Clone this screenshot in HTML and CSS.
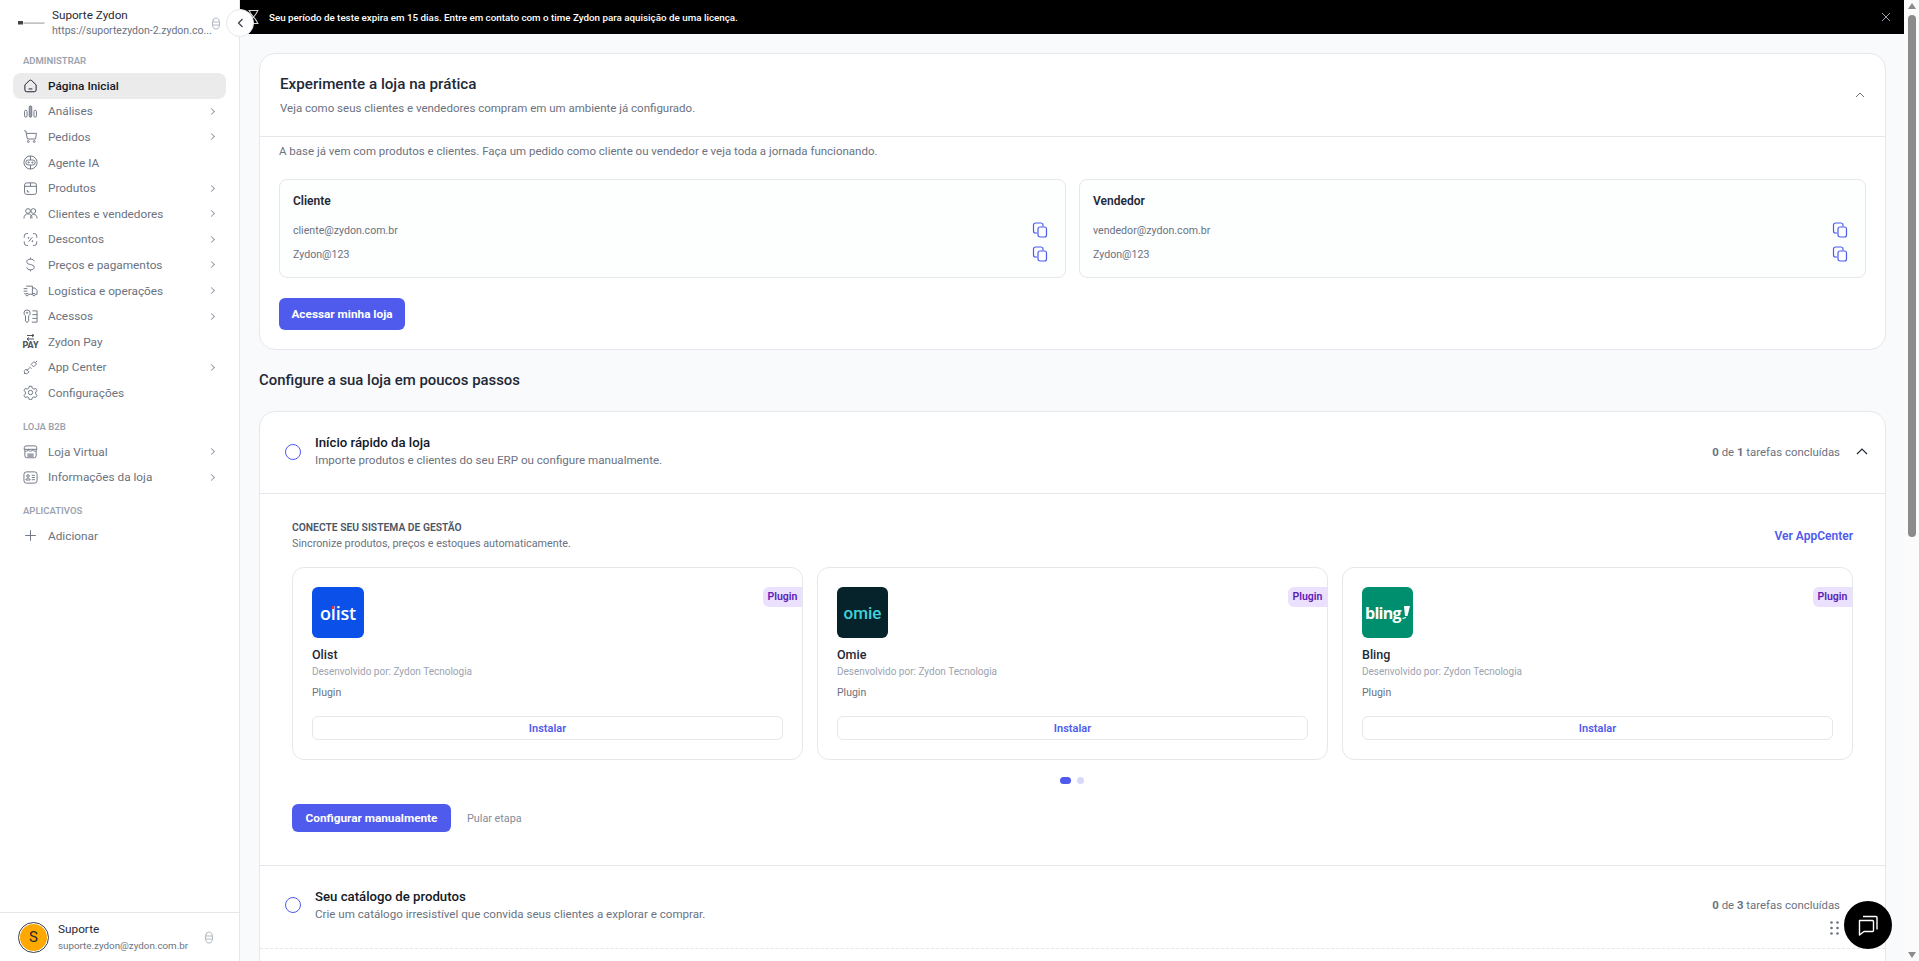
FILE: index.html
```html
<!DOCTYPE html>
<html lang="pt-BR">
<head>
<meta charset="utf-8">
<title>Zydon</title>
<link rel="stylesheet" href="styles.css">
</head>
<body>
<aside class="sidebar">
  <div class="brand">
    <svg class="brand-logo" width="28" height="4" viewBox="0 0 28 4"><rect x="1" y="0" width="5" height="3.500" fill="#444"/><rect x="6.500" y="1.500" width="21" height="1.200" fill="#aaa"/></svg>
    <div class="brand-text">
      <div class="brand-name">Suporte Zydon</div>
      <div class="brand-url">https://suportezydon-2.zydon.co...</div>
    </div>
    <svg class="stack-icon" width="10" height="13" viewBox="0 0 10 13"><ellipse cx="5" cy="6.5" rx="3.6" ry="5.5" fill="none" stroke="#b4bac4" stroke-width="1.1"/><path d="M1.5 5h7M1.5 8h7" stroke="#b4bac4" stroke-width="1"/></svg>
  </div>
  <nav class="nav">
    <div class="nav-label nav-label-first">ADMINISTRAR</div>
    <a class="nav-item active"><svg class="ni" viewBox="0 0 24 24"><path d="M3 11 10 4.200a3 3 0 0 1 4 0L21 11v8a3 3 0 0 1-3 3H6a3 3 0 0 1-3-3ZM9 17.500h6"/></svg><span>Página Inicial</span></a>
    <a class="nav-item"><svg class="ni" viewBox="0 0 24 24"><rect x="2.500" y="10" width="4" height="11" rx="2"/><rect x="10" y="3" width="4" height="18" rx="2" fill="#9ca3af"/><rect x="17.500" y="10" width="4" height="11" rx="2"/></svg><span>Análises</span><i class="chev"></i></a>
    <a class="nav-item"><svg class="ni" viewBox="0 0 24 24"><path d="M2 3h2.500l2.500 13h13l1.500-9H5.500"/><circle cx="8.500" cy="20" r="1.500"/><circle cx="18" cy="20" r="1.500"/></svg><span>Pedidos</span><i class="chev"></i></a>
    <a class="nav-item"><svg class="ni" viewBox="0 0 24 24"><circle cx="12" cy="12" r="10.500"/><rect x="4.500" y="8" width="15" height="8" rx="4"/><circle cx="9" cy="12" r="1"/><circle cx="15" cy="12" r="1"/><path d="M12 1.500V8M12 16v6.500"/></svg><span>Agente IA</span></a>
    <a class="nav-item"><svg class="ni" viewBox="0 0 24 24"><rect x="2.500" y="3" width="19" height="18.500" rx="3.500"/><path d="M2.500 8.500h19M12 3v5.500M7 14.500v3h3"/></svg><span>Produtos</span><i class="chev"></i></a>
    <a class="nav-item"><svg class="ni" viewBox="0 0 24 24"><circle cx="8" cy="8" r="3.800"/><circle cx="16.500" cy="8" r="3.800"/><path d="M1.500 20c0-5 3-7.500 6.500-7.500s6.500 2.500 6.500 7.500M12 20c0-4 2-6.500 5-6.500 3.500 0 5.500 2.500 5.500 6.500"/></svg><span>Clientes e vendedores</span><i class="chev"></i></a>
    <a class="nav-item"><svg class="ni" viewBox="0 0 24 24"><path d="M8 2.500H6a4 4 0 0 0-4 4V9M16 2.500h2a4 4 0 0 1 4 4V9M8 21.500H6a4 4 0 0 1-4-4V15M16 21.500h2a4 4 0 0 0 4-4V15M9 15.500l6-7"/><circle cx="9" cy="9.500" r=".8"/><circle cx="15" cy="14.500" r=".8"/></svg><span>Descontos</span><i class="chev"></i></a>
    <a class="nav-item"><svg class="ni" viewBox="0 0 24 24"><path d="M18 7c-.5-2.500-3-3.500-6-3.500-3.500 0-6 1.500-6 4.200 0 6 12 2.800 12 8.600 0 2.700-2.500 4.200-6 4.200-3.300 0-5.700-1.300-6-4M12 1v2.500M12 20.500V23"/></svg><span>Preços e pagamentos</span><i class="chev"></i></a>
    <a class="nav-item"><svg class="ni" viewBox="0 0 24 24"><path d="M5 5h10v13H9M15 8h4l3.500 4v6H20M1 9h6M1 13h6M2 17h2"/><circle cx="6.500" cy="18.500" r="2"/><circle cx="17.500" cy="18.500" r="2"/></svg><span>Logística e operações</span><i class="chev"></i></a>
    <a class="nav-item"><svg class="ni" viewBox="0 0 24 24"><path d="M6.500 1.500a5 5 0 0 1 5 5c0 2-1 3.500-2.500 4.300V19l-2.500 3L4 19v-8.200A5 5 0 0 1 1.500 6.500a5 5 0 0 1 5-5ZM15 3h7.500v18H14M15 9h7.500M15 15h7.500"/><circle cx="6.500" cy="6" r="1"/></svg><span>Acessos</span><i class="chev"></i></a>
    <a class="nav-item"><span class="pay-icon"><svg width="11" height="7" viewBox="0 0 11 7"><path d="M2 1.500h7M7 0l2 1.500L7 3M9 5H2M4 3.500 2 5l2 1.500" fill="none" stroke="#4b5563" stroke-width="1"/></svg><b>PAY</b></span><span>Zydon Pay</span></a>
    <a class="nav-item"><svg class="ni" viewBox="0 0 24 24"><path d="M13 7l4-4 2 .5 1.500 1.500.5 2-4 4Z M10.500 12.500 6 17"/><path d="M5 14.500l4.500 4.500-2 2a3 3 0 0 1-4.500-4.500Z"/><path d="M10 10.500l3.500 3.500M1.500 22.500l1.500-1.500M20 4l2.500-2.500"/></svg><span>App Center</span><i class="chev"></i></a>
    <a class="nav-item"><svg class="ni" viewBox="0 0 24 24"><circle cx="12" cy="12" r="3.500"/><path d="M10 2h4l.7 3 2.700 1.500 3-.9 2 3.400-2.200 2.200v3.100l2.200 2.200-2 3.400-3-.9-2.700 1.500-.7 3h-4l-.7-3-2.700-1.500-3 .9-2-3.400 2.200-2.200v-3.100L1.600 9l2-3.400 3 .9L9.300 5Z"/></svg><span>Configurações</span></a>
    <div class="nav-label">LOJA B2B</div>
    <a class="nav-item"><svg class="ni" viewBox="0 0 24 24"><path d="M5 3h14a3 3 0 0 1 3 3v2.500H2V6a3 3 0 0 1 3-3ZM2 8.500c0 2 1.500 3 3.300 3s3.300-1 3.300-3c0 2 1.500 3 3.400 3s3.400-1 3.400-3c0 2 1.500 3 3.300 3s3.300-1 3.300-3M3 11v8a3 3 0 0 0 3 3h12a3 3 0 0 0 3-3v-8"/><rect x="7" y="15" width="10" height="7" fill="#9ca3af" stroke="none"/></svg><span>Loja Virtual</span><i class="chev"></i></a>
    <a class="nav-item"><svg class="ni" viewBox="0 0 24 24"><rect x="1.500" y="3" width="21" height="18" rx="4"/><circle cx="8" cy="9.500" r="2"/><path d="M4.500 16c.5-2 2-3 3.500-3s3 1 3.500 3ZM14 8.500h5M14 12h5M14 15.500h5"/></svg><span>Informações da loja</span><i class="chev"></i></a>
    <div class="nav-label nav-label-apps">APLICATIVOS</div>
    <a class="nav-item"><svg class="ni" viewBox="0 0 24 24"><path d="M12 3.500v17M3.500 12h17"/></svg><span>Adicionar</span></a>
  </nav>
  <div class="user">
    <div class="avatar"><span>S</span></div>
    <div class="user-text">
      <div class="user-name">Suporte</div>
      <div class="user-mail">suporte.zydon@zydon.com.br</div>
    </div>
    <svg class="stack-icon" width="10" height="13" viewBox="0 0 10 13"><ellipse cx="5" cy="6.500" rx="3.600" ry="5.500" fill="none" stroke="#b4bac4" stroke-width="1.100"/><path d="M1.500 5h7M1.500 8h7" stroke="#b4bac4" stroke-width="1"/></svg>
  </div>
</aside>

<main class="main">
  <div class="banner">
    <svg class="hourglass" width="11" height="14" viewBox="0 0 11 14"><path d="M.5 .5h10M.5 13.500h10M1.500 .5c0 4 8 9 8 13M9.500 .5c0 4-8 9-8 13" fill="none" stroke="#d9d9d9" stroke-width="1.100"/></svg>
    <span class="banner-text">Seu período de teste expira em 15 dias. Entre em contato com o time Zydon para aquisição de uma licença.</span>
    <svg class="banner-close" width="10" height="10" viewBox="0 0 10 10"><path d="M1 1l8 8M9 1l-8 8" stroke="#9ca3af" stroke-width="1"/></svg>
  </div>
  <div class="content">
    <section class="card">
      <header class="card-head">
        <div>
          <h2 class="card-title">Experimente a loja na prática</h2>
          <p class="card-sub">Veja como seus clientes e vendedores compram em um ambiente já configurado.</p>
        </div>
        <svg class="card-chev" width="10" height="6" viewBox="0 0 10 6"><path d="M1 5l4-4 4 4" fill="none" stroke="#6b7280" stroke-width="1"/></svg>
      </header>
      <div class="card-body">
        <p class="intro">A base já vem com produtos e clientes. Faça um pedido como cliente ou vendedor e veja toda a jornada funcionando.</p>
        <div class="cred-grid">
          <div class="cred">
            <div class="cred-title">Cliente</div>
            <div class="cred-row"><span>cliente@zydon.com.br</span><svg class="copy" viewBox="0 0 16 16"><path d="M11 4.500V3a2 2 0 0 0-2-2H3.500a2 2 0 0 0-2 2v6a2 2 0 0 0 2 2H5"/><rect x="6" y="5" width="8.500" height="10" rx="2"/></svg></div>
            <div class="cred-row"><span>Zydon@123</span><svg class="copy" viewBox="0 0 16 16"><path d="M11 4.500V3a2 2 0 0 0-2-2H3.500a2 2 0 0 0-2 2v6a2 2 0 0 0 2 2H5"/><rect x="6" y="5" width="8.500" height="10" rx="2"/></svg></div>
          </div>
          <div class="cred">
            <div class="cred-title">Vendedor</div>
            <div class="cred-row"><span>vendedor@zydon.com.br</span><svg class="copy" viewBox="0 0 16 16"><path d="M11 4.500V3a2 2 0 0 0-2-2H3.500a2 2 0 0 0-2 2v6a2 2 0 0 0 2 2H5"/><rect x="6" y="5" width="8.500" height="10" rx="2"/></svg></div>
            <div class="cred-row"><span>Zydon@123</span><svg class="copy" viewBox="0 0 16 16"><path d="M11 4.500V3a2 2 0 0 0-2-2H3.500a2 2 0 0 0-2 2v6a2 2 0 0 0 2 2H5"/><rect x="6" y="5" width="8.500" height="10" rx="2"/></svg></div>
          </div>
        </div>
        <button class="btn btn-store">Acessar minha loja</button>
      </div>
    </section>

    <h2 class="section-title">Configure a sua loja em poucos passos</h2>

    <section class="card steps">
      <header class="step-head step-open">
        <span class="radio"></span>
        <div class="step-text">
          <h3 class="step-title">Início rápido da loja</h3>
          <p class="step-sub">Importe produtos e clientes do seu ERP ou configure manualmente.</p>
        </div>
        <span class="count"><b>0</b> de <b>1</b> tarefas concluídas</span>
        <svg class="step-chev" width="12" height="7" viewBox="0 0 12 7"><path d="M1 6l5-5 5 5" fill="none" stroke="#1f2937" stroke-width="1.200"/></svg>
      </header>
      <div class="step-body">
        <div class="connect-head">
          <div>
            <div class="connect-title">CONECTE SEU SISTEMA DE GESTÃO</div>
            <div class="connect-sub">Sincronize produtos, preços e estoques automaticamente.</div>
          </div>
          <a class="appcenter">Ver AppCenter</a>
        </div>
        <div class="plugins">
          <article class="plugin">
            <span class="badge">Plugin</span>
            <div class="logo logo-olist"><span class="olist-word">olist<i class="olist-dot"></i></span></div>
            <div class="plugin-name">Olist</div>
            <div class="plugin-dev">Desenvolvido por: Zydon Tecnologia</div>
            <div class="plugin-type">Plugin</div>
            <button class="install">Instalar</button>
          </article>
          <article class="plugin">
            <span class="badge">Plugin</span>
            <div class="logo logo-omie"><span>omie</span></div>
            <div class="plugin-name">Omie</div>
            <div class="plugin-dev">Desenvolvido por: Zydon Tecnologia</div>
            <div class="plugin-type">Plugin</div>
            <button class="install">Instalar</button>
          </article>
          <article class="plugin">
            <span class="badge">Plugin</span>
            <div class="logo logo-bling"><span>bling</span><svg class="bling-mark" width="8" height="14" viewBox="0 0 8 14"><path d="M2 0H8L5.500 10 3 10Z" fill="#fff"/><path d="M.5 12.500 4 11.500" stroke="#fff" stroke-width="1.200"/></svg></div>
            <div class="plugin-name">Bling</div>
            <div class="plugin-dev">Desenvolvido por: Zydon Tecnologia</div>
            <div class="plugin-type">Plugin</div>
            <button class="install">Instalar</button>
          </article>
        </div>
        <div class="dots"><i class="dot dot-on"></i><i class="dot"></i></div>
        <div class="actions">
          <button class="btn btn-config">Configurar manualmente</button>
          <a class="skip">Pular etapa</a>
        </div>
      </div>
      <header class="step-head step-next">
        <span class="radio"></span>
        <div class="step-text">
          <h3 class="step-title">Seu catálogo de produtos</h3>
          <p class="step-sub">Crie um catálogo irresistível que convida seus clientes a explorar e comprar.</p>
        </div>
        <span class="count"><b>0</b> de <b>3</b> tarefas concluídas</span>
        <span class="step-chev-space"></span>
      </header>
      <div class="steps-rest"></div>
    </section>
  </div>
</main>

<div class="scrollbar" aria-hidden="true">
  <i class="arrow-up"></i>
  <i class="thumb"></i>
  <i class="arrow-down"></i>
</div>

<button class="sidebar-toggle" aria-label="Recolher"><svg width="7" height="10" viewBox="0 0 7 10"><path d="M5.500 1 1.500 5l4 4" fill="none" stroke="#374151" stroke-width="1.200"/></svg></button>
<svg class="drag-dots" width="9" height="14" viewBox="0 0 9 14"><g fill="#6b7280"><circle cx="1.500" cy="1.500" r="1.300"/><circle cx="7.500" cy="1.500" r="1.300"/><circle cx="1.500" cy="7" r="1.300"/><circle cx="7.500" cy="7" r="1.300"/><circle cx="1.500" cy="12.500" r="1.300"/><circle cx="7.500" cy="12.500" r="1.300"/></g></svg>
<button class="chat" aria-label="Chat"><svg width="24" height="24" viewBox="0 0 24 24"><path d="M7 3.500h13a1 1 0 0 1 1 1v12" fill="none" stroke="#fff" stroke-width="1.400"/><path d="M3.500 7.500h13a1 1 0 0 1 1 1v9a1 1 0 0 1-1 1H8l-4.500 3.500Z" fill="none" stroke="#fff" stroke-width="1.400" stroke-linejoin="round"/></svg></button>
</body>
</html>
```

FILE: styles.css
```css
* { box-sizing: border-box; }
html, body { height: 100%; }
body {
  margin: 0;
  display: flex;
  overflow: hidden;
  font-family: Roboto, "Noto Sans", sans-serif;
  color: #111827;
  background: #f9fafb;
  position: relative;
}
h2, h3, p { margin: 0; font-weight: 500; }
button { font-family: inherit; cursor: pointer; }

.sidebar {
  width: 240px;
  flex: none;
  background: #fff;
  border-right: 1px solid #e5e7eb;
  display: flex;
  flex-direction: column;
}
.brand {
  display: flex;
  align-items: center;
  height: 46px;
  padding: 0 0 0 17px;
}
.brand-logo { flex: none; margin-right: 7px; }
.brand-text { width: 159px; }
.brand-name { font-size: 11.700px; line-height: 16px; color: #1f2937; }
.brand-url { font-size: 10.500px; line-height: 16px; color: #6b7280; white-space: nowrap; }
.stack-icon { flex: none; }

.nav { padding: 6px 13px 0; display: flex; flex-direction: column; }
.nav-label {
  font-size: 9.500px;
  font-weight: 600;
  color: #9ca3af;
  line-height: 16px;
  padding-left: 10px;
  margin: 13px 0 4px;
}
.nav-label-first { margin: 1px 0 4px; }
.nav-item {
  display: flex;
  align-items: center;
  height: 25.6px;
  font-size: 11.800px;
  color: #6b7280;
  padding-left: 10px;
  border-radius: 8px;
  position: relative;
}
.nav-item.active { background: #ebebeb; color: #111827; font-weight: 500; }
.ni {
  width: 15px;
  height: 15px;
  margin-right: 10px;
  flex: none;
  fill: none;
  stroke: #6b7280;
  stroke-width: 1.500;
}
.active .ni { stroke: #111827; }
.chev {
  width: 5px;
  height: 5px;
  border-top: 1px solid #9ca3af;
  border-right: 1px solid #9ca3af;
  transform: rotate(45deg);
  margin-left: auto;
  margin-right: 12px;
}
.pay-icon {
  width: 15px;
  margin-right: 10px;
  display: flex;
  flex-direction: column;
  align-items: center;
  line-height: 8px;
}
.pay-icon b { font-size: 9px; color: #4b5563; font-weight: 800; }

.user {
  margin-top: auto;
  height: 49px;
  border-top: 1px solid #e5e7eb;
  display: flex;
  align-items: center;
  padding-left: 18px;
}
.avatar {
  width: 31px;
  height: 31px;
  border-radius: 50%;
  border: 1px solid #374151;
  padding: 1px;
  flex: none;
  margin-right: 9px;
}
.avatar span {
  display: flex;
  align-items: center;
  justify-content: center;
  width: 100%;
  height: 100%;
  border-radius: 50%;
  background: #ffa800;
  font-size: 15px;
  color: #1f2937;
}
.user-text { width: 146px; }
.user-name { font-size: 11.800px; line-height: 17px; color: #1f2937; }
.user-mail { font-size: 9.800px; line-height: 16px; color: #6b7280; white-space: nowrap; }

.main {
  width: 1664px;
  flex: none;
  display: flex;
  flex-direction: column;
}
.banner {
  height: 34px;
  flex: none;
  background: #000;
  display: flex;
  align-items: center;
  padding: 0 13px 0 8px;
}
.hourglass { margin-right: 10px; flex: none; margin-top: -1px; }
.banner-text { font-size: 9.800px; font-weight: 500; color: #fff; }
.banner-close { margin-left: auto; }

.content { padding: 19px 18px 0 19px; flex: 1; overflow: hidden; }
.card {
  background: #fff;
  border: 1px solid #e5e7eb;
  border-radius: 16px;
}
.card-head {
  height: 83px;
  border-bottom: 1px solid #e5e7eb;
  padding: 0 20px;
  display: flex;
  align-items: center;
  justify-content: space-between;
}
.card-title { font-size: 15.200px; line-height: 20px; color: #1f2937; }
.card-sub { font-size: 11.500px; line-height: 18px; color: #6b7280; margin-top: 5px; font-weight: 400; }
.card-body { padding: 5px 19px 19px; }
.intro { font-size: 11.500px; line-height: 18px; color: #6b7280; font-weight: 400; }
.cred-grid { display: grid; grid-template-columns: 1fr 1fr; gap: 13px; margin-top: 19px; }
.cred {
  height: 99px;
  border: 1px solid #e5e7eb;
  border-radius: 8px;
  background: #fdfefe;
  padding: 12px 17px 0 13px;
}
.cred-title { font-size: 12px; font-weight: 600; line-height: 18px; color: #1f2937; margin-bottom: 8px; }
.cred-row {
  display: flex;
  justify-content: space-between;
  align-items: center;
  height: 24px;
  font-size: 10.600px;
  color: #6b7280;
}
.copy { width: 16px; height: 16px; fill: none; stroke: #4f5bed; stroke-width: 1.200; }
.btn {
  border: 0;
  border-radius: 6px;
  background: #4f5bed;
  color: #fff;
  font-weight: 700;
  font-size: 11.800px;
}
.btn-store { width: 126px; height: 32px; margin-top: 20px; display: block; }

.section-title { font-size: 14.900px; line-height: 20px; color: #1f2937; margin: 20px 0 21px; }

.step-head { display: flex; align-items: center; padding: 0 17px 0 25px; }
.step-open { height: 82px; border-bottom: 1px solid #e5e7eb; padding-bottom: 2px; }
.step-next { height: 83px; border-bottom: 1px dashed #e5e7eb; padding-bottom: 4px; }
.radio {
  width: 16px;
  height: 16px;
  border: 1.500px solid #4f5bed;
  border-radius: 50%;
  flex: none;
  margin-right: 14px;
}
.step-text { flex: 1; }
.step-title { font-size: 13.200px; line-height: 18px; color: #111827; }
.step-sub { font-size: 11.600px; line-height: 17px; color: #6b7280; font-weight: 400; }
.count { font-size: 11.400px; color: #6b7280; margin-right: 16px; }
.count b { font-weight: 700; }
.step-chev { width: 12px; flex: none; }
.step-chev-space { width: 12px; flex: none; }
.step-body { padding: 26px 32px 33px; border-bottom: 1px solid #e5e7eb; }
.connect-head { display: flex; justify-content: space-between; align-items: center; }
.connect-title { font-size: 10.300px; font-weight: 600; line-height: 16px; color: #4b5563; }
.connect-sub { font-size: 10.800px; line-height: 16px; color: #6b7280; }
.appcenter { font-size: 12px; font-weight: 600; color: #4f5bed; }
.plugins { display: grid; grid-template-columns: repeat(3, 1fr); gap: 14px; margin-top: 15px; }
.plugin {
  position: relative;
  height: 193px;
  border: 1px solid #e5e7eb;
  border-radius: 12px;
  padding: 19px 19px 0;
}
.badge {
  position: absolute;
  top: 19px;
  right: 0;
  width: 39px;
  height: 20px;
  background: #ebe0fd;
  color: #5b21b6;
  font-size: 10.500px;
  font-weight: 600;
  line-height: 19px;
  text-align: center;
  border-radius: 6px 0 0 6px;
}
.logo {
  width: 52px;
  height: 51px;
  border-radius: 6px;
  display: flex;
  align-items: center;
  justify-content: center;
  color: #fff;
}
.logo-olist { background: #0b50e8; font-size: 18px; font-weight: 600; font-family: "Open Sans", sans-serif; letter-spacing: -.2px; }
.olist-word { position: relative; }
.olist-dot {
  position: absolute;
  left: 12px;
  top: 5px;
  width: 2px;
  height: 3px;
  background: #e8352b;
}
.logo-omie { background: #06222a; color: #3ed2da; font-size: 17px; font-weight: 500; width: 51px; }
.logo-bling { background: #008f6e; font-size: 16px; font-weight: 700; width: 51px; letter-spacing: -.7px; font-family: "Open Sans", sans-serif; }
.bling-mark { margin-left: 1px; }
.plugin-name { font-size: 12.500px; font-weight: 500; line-height: 16px; color: #1f2937; margin-top: 9px; }
.plugin-dev { font-size: 10px; line-height: 14px; color: #9ca3af; margin-top: 2px; }
.plugin-type { font-size: 10.500px; line-height: 14px; color: #6b7280; margin-top: 7px; }
.install {
  display: block;
  width: 100%;
  height: 24px;
  background: #fff;
  border: 1px solid #e5e7eb;
  border-radius: 6px;
  color: #4f5bed;
  font-size: 11px;
  font-weight: 600;
  margin-top: 16px;
}
.dots { display: flex; justify-content: center; gap: 6px; margin-top: 17px; height: 8px; padding-right: 2px; }
.dot { width: 7px; height: 7px; border-radius: 50%; background: #d6d9fa; }
.dot-on { width: 11px; border-radius: 4px; background: #4f5bed; }
.actions { display: flex; align-items: center; margin-top: 19px; }
.btn-config { width: 159px; height: 28px; }
.skip { font-size: 10.800px; color: #858c97; margin-left: 16px; }
.steps-rest { height: 60px; }

.scrollbar {
  width: 15px;
  flex: none;
  background: #fbfbfc;
  position: relative;
}
.thumb {
  position: absolute;
  top: 15px;
  left: 4px;
  width: 8px;
  height: 522px;
  background: #8b8b8b;
  border-radius: 4px;
}
.arrow-up, .arrow-down {
  width: 0;
  height: 0;
  border-left: 4px solid transparent;
  border-right: 4px solid transparent;
  position: absolute;
  left: 4px;
}
.arrow-up { top: 3px; border-bottom: 6px solid #8b8b8b; }
.arrow-down { bottom: 3px; border-top: 6px solid #8b8b8b; }

.sidebar-toggle {
  position: absolute;
  left: 226px;
  top: 9px;
  width: 28px;
  height: 28px;
  border-radius: 50%;
  background: #fff;
  border: 1px solid #e5e7eb;
  display: flex;
  align-items: center;
  justify-content: center;
  padding: 0;
}
.drag-dots { position: absolute; left: 1830px; top: 921px; }
.chat {
  position: absolute;
  left: 1844px;
  top: 901px;
  width: 48px;
  height: 48px;
  border-radius: 50%;
  background: #000;
  border: 0;
  display: flex;
  align-items: center;
  justify-content: center;
  padding: 0;
}
```
